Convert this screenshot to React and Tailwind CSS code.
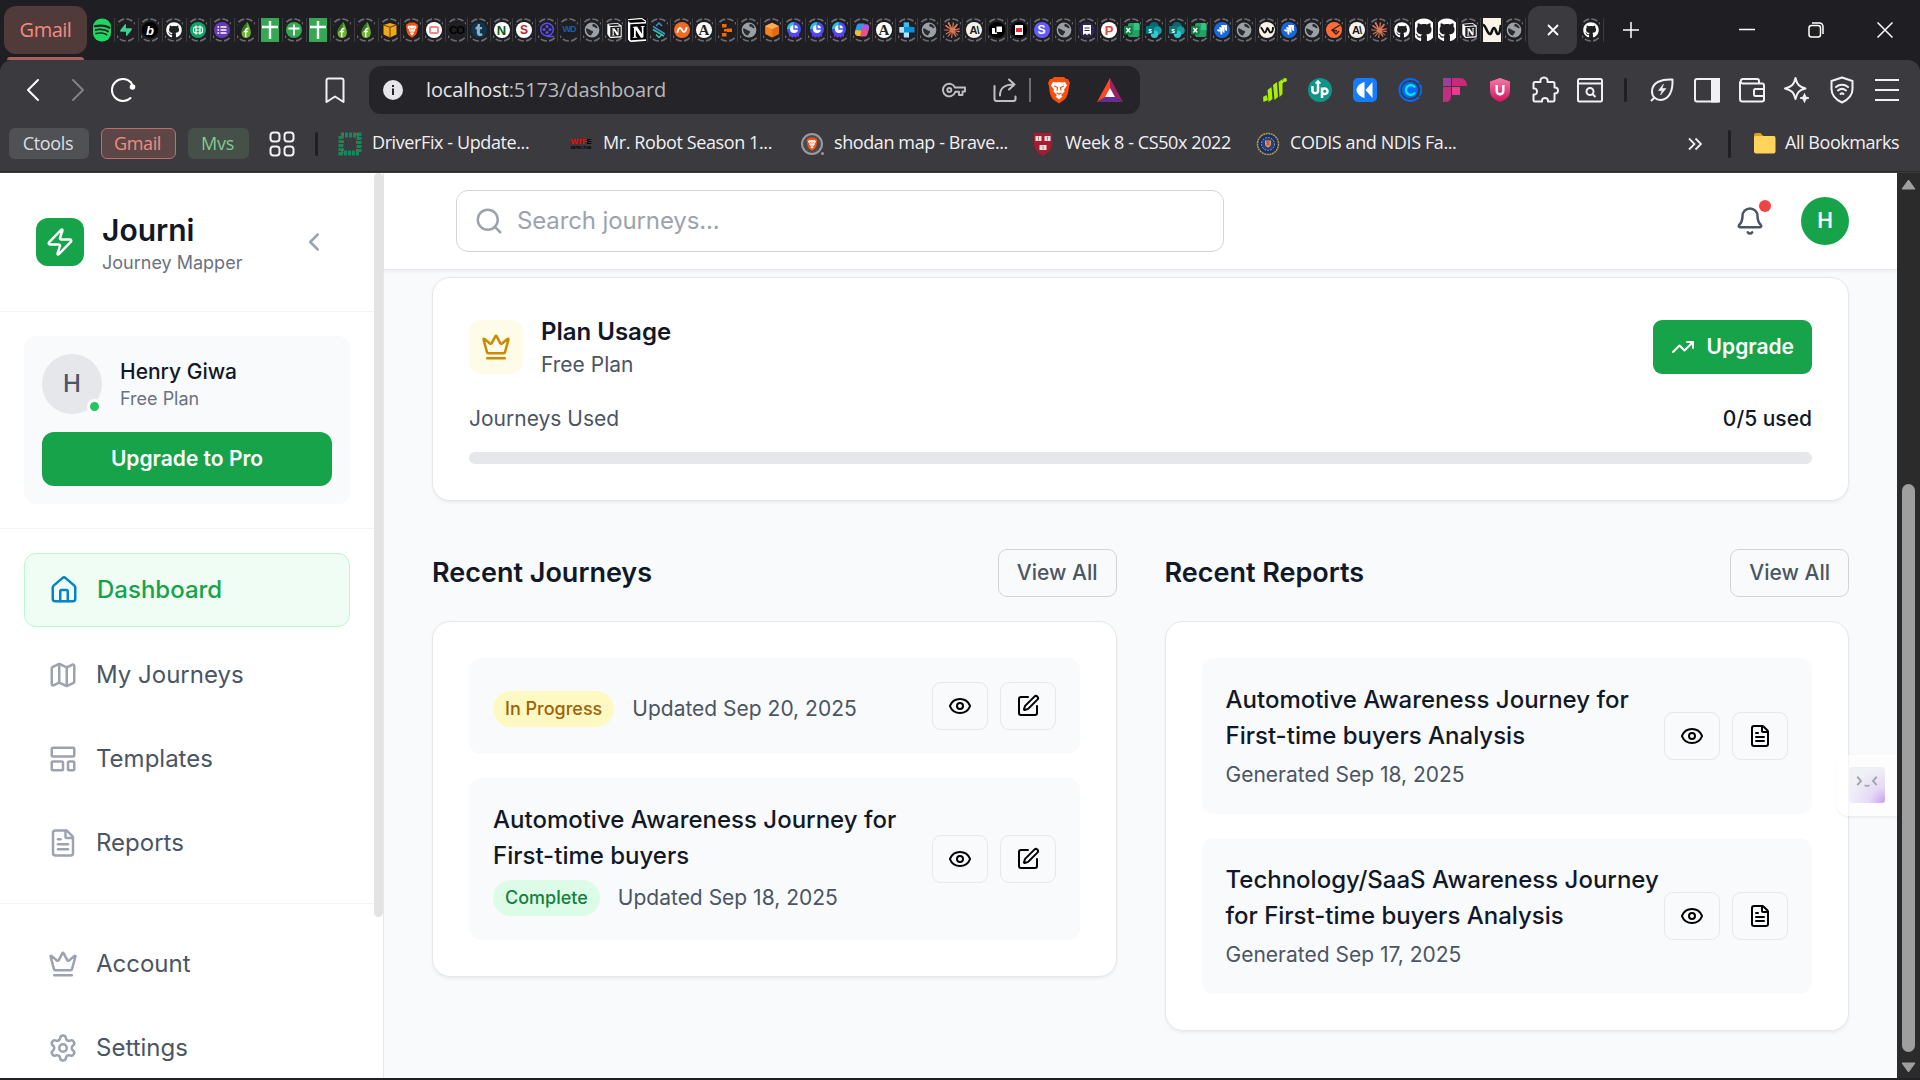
import React from "react";
import {
  Bell, ChevronLeft, Crown, Eye, FileText, House, LayoutTemplate, Map as MapIcon,
  Search, Settings, SquarePen, TrendingUp, Zap,
} from "lucide-react";
import { FaGithub, FaSpotify, FaTumblr } from "react-icons/fa6";
import { SiNotion, SiSupabase, SiClaude } from "react-icons/si";

/* ---------- browser tab strip ---------- */

const Globe = () => (
  <svg viewBox="0 0 16 16" className="size-4">
    <circle cx="8" cy="8" r="7.4" fill="#9aa0a6" />
    <path d="M2 6.5c2 0 3 .5 4.2 1.6 1 .9 2.3.3 2.8 1.4.5 1.2-.8 1.6-1.2 2.6-.3.8-.6 1.6-1.5 1.5C4 13 2 10.600 2 6.500zM9 1.800c-.8 1.200-1 1.900-.2 2.600.9.7 1.700.1 2.300 1 .5.800 1.600.9 2.700.7C13 3.800 11.500 2.200 9 1.800z" fill="#2a2a2f" />
  </svg>
);
const Disc = ({ bg, fg = "#fff", children, cls = "" }) => (
  <span
    className={`grid size-4 place-items-center overflow-hidden rounded-full font-['Liberation_Sans'] text-[11px] leading-none font-bold ${cls}`}
    style={{ backgroundColor: bg, color: fg }}
  >
    {children}
  </span>
);
const Forms = ({ bg }) => (
  <Disc bg={bg}>
    <svg viewBox="0 0 16 16" className="size-4" stroke="#fff" strokeWidth="1.700">
      <path d="M3.500 5h1.600M6.500 5h6M3.500 8h1.600M6.500 8h6M3.500 11h1.600M6.500 11h6" />
    </svg>
  </Disc>
);
const Leaf = () => (
  <svg viewBox="0 0 16 16" className="size-4">
    <path d="M9.500 0C6 4 3.500 7 3.500 10.500 3.500 14 5.500 16 8 16s4.800-2 4.800-5.300C12.800 7 11 4 9.500 0z" fill="#6cb52d" />
    <path d="M9.500 0C6 4 3.500 7 3.500 10.500l5-4z" fill="#2f7d1e" />
    <path d="M10.500 6.500c-2.200-.5-2.800.8-2.800 2.500V15M5.800 9.600h4" stroke="#fff" strokeWidth="1.500" fill="none" />
  </svg>
);
const SheetsFull = () => (
  <svg viewBox="0 0 18 24" className="h-6 w-[18px]">
    <path d="M0 0h18v24H0z" fill="#34a853" />
    <path d="M9 3v18M1 9h16" stroke="#fff" strokeWidth="2.400" />
  </svg>
);
const SheetsSmall = () => (
  <Disc bg="#34a853">
    <svg viewBox="0 0 16 16" className="size-4" stroke="#fff" strokeWidth="1.800"><path d="M8 2.500v11M2.500 6.500h11" /></svg>
  </Disc>
);
const Box = () => (
  <svg viewBox="0 0 16 16" className="size-4">
    <path d="M1.500 3L8 1l6.500 2v9.500L8 15.500l-6.500-3z" fill="#f0a81c" />
    <path d="M1.500 3L8 5.200 14.500 3M8 5.200v10" stroke="#6b4708" strokeWidth="1.100" fill="none" />
  </svg>
);
const Cube = () => (
  <svg viewBox="0 0 16 16" className="size-4">
    <path d="M8 .8L14.800 4v8L8 15.500 1.200 12V4z" fill="#f58220" />
    <path d="M8 .8L14.800 4 8 7.300 1.200 4z" fill="#fbab5a" />
    <path d="M8 7.300L14.800 4v8L8 15.500z" fill="#e06c10" />
  </svg>
);
const Medal = () => (
  <svg viewBox="0 0 16 16" className="size-4">
    <path d="M3 9h10v6l-2-1-1 2-2-1.500L6 16l-1-2-2 1z" fill="#7b2ff0" />
    <circle cx="8" cy="7" r="7" fill="#4a4bf5" />
    <path d="M1 7a7 7 0 0 1 7-7v7z" fill="#20c5d8" />
    <circle cx="8" cy="7" r="4" fill="#fff" />
    <path d="M8 2.500V7h4.500" stroke="#3b5bf5" strokeWidth="1.300" fill="none" />
  </svg>
);
const Copilot = () => (
  <svg viewBox="0 0 16 16" className="size-4">
    <path d="M5 1.500h5.500l-3 12H3.500C1 13.500.5 11 1.200 8.500L2.500 4C3 2.500 3.500 1.500 5 1.500z" fill="#2a9be8" />
    <path d="M1 9l2-1 5 1-1 5H3.500C1 13.500.500 11 1 9z" fill="#f5c21c" />
    <path d="M11 14.500H6l3-12h3.500c2.500 0 3 2.500 2.300 5L13.500 12c-.5 1.500-1 2.500-2.500 2.500z" fill="#e8528a" />
    <path d="M9 2.500h3.500c2.500 0 3 2.500 2.300 5l-6.500-1z" fill="#a45bea" />
  </svg>
);
const Checker = () => (
  <svg viewBox="0 0 16 16" className="size-4">
    <path d="M4.500 .500H10V5h5.500v5.500H10V15H4.500v-4.500H.500V5h4z" fill="#0a8fd8" />
    <path d="M.500 5h4.500v5.500H.500zM5 .500h5V5H5z" fill="#35c0f0" />
    <path d="M5 10.500h5V15.500H5zM.500 5H5v5.500H.500z" fill="#aee3f8" />
  </svg>
);
const ZigS = () => (
  <svg viewBox="0 0 16 16" className="size-4" fill="none" strokeWidth="1.500">
    <path d="M5 4l3-3 3 3M2 4.500l12 7.500" stroke="#3f8fd0" />
    <path d="M2 7.500L13 14M5 12.500l3 3 3-3" stroke="#35c8a0" />
  </svg>
);
const Excel = () => (
  <svg viewBox="0 0 16 16" className="size-4">
    <rect x="4" y="1" width="11.500" height="14" rx="2" fill="#21a366" />
    <path d="M10 1h4a1.500 1.500 0 0 1 1.500 1.500V8H10z" fill="#33c481" />
    <rect x="0" y="4" width="8.500" height="8.500" rx="1" fill="#107c41" />
    <path d="M2.300 6l4 4.500m0-4.500l-4 4.500" stroke="#fff" strokeWidth="1.300" />
  </svg>
);
const SharePoint = () => (
  <svg viewBox="0 0 16 16" className="size-4">
    <circle cx="8" cy="5" r="5" fill="#036c70" />
    <circle cx="11.500" cy="8.500" r="4.300" fill="#1a9ba1" />
    <circle cx="8.500" cy="12.300" r="3.700" fill="#37c6d0" />
    <rect x="0" y="4" width="8" height="8" rx="1" fill="#03787c" />
    <text x="4" y="10.500" fontSize="7.500" fontWeight="700" textAnchor="middle" fill="#fff">s</text>
  </svg>
);
const Jira = () => (
  <Disc bg="#1868db">
    <svg viewBox="0 0 16 16" className="size-4" fill="#fff">
      <path d="M7 3h6v6c-1.500 0-2.200-1-2.200-2.200V5.300H9.200C8 5.300 7 4.500 7 3zM5 5.200h5.500v5.500c-1.400 0-2-1-2-2V7.400H7.200C6 7.400 5 6.600 5 5.200zM3 7.400h5.300v5.400c-1.400 0-2-1-2-2V9.600H5.200C4 9.600 3 8.800 3 7.400z" />
    </svg>
  </Disc>
);
const Wave = ({ color = "#111" }) => (
  <svg viewBox="0 0 16 16" className="size-4" fill="none" stroke={color} strokeWidth="1.900">
    <path d="M1.500 5.500c2 0 2.500 5 4.300 5S7.500 6 8.500 6s1.500 4.500 3 4.500S14 8 14 5" />
  </svg>
);
const Tilde = () => (
  <svg viewBox="0 0 16 16" className="size-4" fill="none" stroke="#fff" strokeWidth="1.900" strokeLinecap="round">
    <path d="M3.500 10c1-4.500 3-5 4.500-2s3.500 2.500 4.500-2" />
  </svg>
);
const WaveFull = () => (
  <svg viewBox="0 0 18 24" className="h-6 w-[18px]" fill="none">
    <path d="M0 0h18v24H0z" fill="#faf3e8" />
    <path d="M0 7c3 0 4 9 7 9 2 0 2-6 4-6s2 6 4 6 2-4 3-9" stroke="#111" strokeWidth="2.600" />
  </svg>
);
const Postman = () => (
  <Disc bg="#ff6c37">
    <svg viewBox="0 0 16 16" className="size-4" fill="none" stroke="#33201a" strokeWidth="1.300"><path d="M14 3L6 8l4 4 3-3M6 8l5 1" /></svg>
  </Disc>
);
const Reel = () => (
  <svg viewBox="0 0 16 16" className="size-4" fill="none" stroke="#5b4df0" strokeWidth="1.500">
    <circle cx="8" cy="7.500" r="6.300" />
    <path d="M8 14.500h7" />
    <g fill="#5b4df0" stroke="none"><circle cx="8" cy="4.500" r="1.600" /><circle cx="8" cy="10.500" r="1.600" /><circle cx="5" cy="7.500" r="1.600" /><circle cx="11" cy="7.500" r="1.600" /></g>
  </svg>
);
const Blocks = () => (
  <svg viewBox="0 0 16 16" className="size-4" fill="#f56a00"><path d="M3 2h4.500v3.500H3zM3 11h4.500v3.500H3zM8 6.500h5V10H8zM5 7h3v2.500H5z" /></svg>
);
const BraveLion = ({ className = "h-7 w-6" }) => (
  <svg viewBox="0 0 24 28" className={className}>
    <path d="M7 1h10l2 2h2l2 4-1 3c-.5 7-2 12-5 14l-5 3.500L7 24C4 22 2.500 17 2 10L1 7l2-4h2z" fill="#fb4f0d" />
    <path d="M6 6l3 .5L12 6l3 .5 3-.5 2 3.500-3 4 .5 2L14 19l1.500 1.500L12 23.500 8.500 20.500 10 19l-3.500-3.500.5-2-3-4z" fill="#fff" />
    <path d="M7 10l3.500 1.500-.5 3M17 10l-3.500 1.500.5 3M9.500 17l2.500 1 2.500-1" stroke="#fb4f0d" strokeWidth="1.200" fill="none" />
  </svg>
);
const GithubFull = () => (
  <span className="flex h-6 w-[18px] justify-center overflow-hidden"><FaGithub className="size-6 shrink-0 text-white" /></span>
);
const NotionFull = () => (
  <span className="flex h-6 w-[18px] justify-center overflow-hidden bg-black"><SiNotion className="size-6 shrink-0 text-white" /></span>
);
const A = () => <Disc bg="#fff" fg="#222" cls="font-['Liberation_Serif'] text-[15px]">A</Disc>;
const Gh = () => <FaGithub className="size-4 text-white" />;
const Claude = () => <SiClaude className="size-4 text-[#d97757]" />;
const Anth = () => <Disc bg="#f4f3ee" fg="#191919" cls="text-[9px] tracking-[-1px]">A\</Disc>;
const Notion = () => <SiNotion className="size-[15px] text-white" />;

const RING = true;
const favicons = [
  [<span className="flex h-6 w-[18px] justify-center overflow-hidden rounded-[9px] bg-[#202024]"><FaSpotify className="size-6 shrink-0 text-[#1ed760]" /></span>],
  [<SiSupabase className="size-3 text-[#3ecf8e]" />, RING],
  [<Disc bg="#000" cls="text-[13px] italic">b</Disc>, RING],
  [<Gh />, RING],
  [<Disc bg="#10a568"><svg viewBox="0 0 16 16" className="size-4" fill="none" stroke="#fff" strokeWidth="1.200"><rect x="3.500" y="5" width="9" height="6" rx="2" /><path d="M6 3.500v9M10 3.500v9M6 8h4" /></svg></Disc>, RING],
  [<Forms bg="#673ab7" />, RING],
  [<Leaf />, RING],
  [<SheetsFull />],
  [<SheetsSmall />, RING],
  [<SheetsFull />],
  [<Leaf />, RING],
  [<Leaf />, RING],
  [<Box />, RING],
  [<BraveLion className="h-4 w-3.5" />, RING],
  [<Disc bg="#fff"><span className="h-2 w-2.5 rounded-[2px] border-2 border-[#f08a8a]" /></Disc>, RING],
  [<span className="font-['Liberation_Sans'] text-[11px] font-black tracking-[-1px] text-black">CO</span>, RING],
  [<Disc bg="#10344d"><FaTumblr className="size-3 text-[#8fb0c4]" /></Disc>, RING],
  [<Disc bg="#fff" fg="#0a5a14" cls="text-[13px]">N</Disc>, RING],
  [<Disc bg="#fff" fg="#b3262e" cls="text-[12px]">S</Disc>, RING],
  [<Reel />, RING],
  [<span className="font-['Liberation_Sans'] text-[9px] font-bold tracking-[-1px] text-[#1c5fa8]">WD</span>, RING],
  [<Globe />, RING],
  [<Notion />, RING],
  [<NotionFull />],
  [<ZigS />, RING],
  [<Disc bg="#f26b21"><Tilde /></Disc>, RING],
  [<A />, RING],
  [<Blocks />, RING],
  [<Globe />, RING],
  [<Cube />, RING],
  [<Medal />, RING],
  [<Medal />, RING],
  [<Medal />, RING],
  [<Copilot />, RING],
  [<A />, RING],
  [<Checker />, RING],
  [<Globe />, RING],
  [<Claude />, RING],
  [<Anth />, RING],
  [<Disc bg="#000"><svg viewBox="0 0 16 16" className="size-4" fill="#fff"><path d="M3 6h3v4.500h2V12H3zM7.500 4.500H13V10H7.500z" /></svg></Disc>, RING],
  [<Disc bg="#000"><span className="grid h-2.5 w-2 place-items-center bg-white"><span className="h-1 w-1.5 bg-[#e0323c]" /></span></Disc>, RING],
  [<Disc bg="#635bff" cls="text-[12px]">S</Disc>, RING],
  [<Globe />, RING],
  [<Disc bg="#2c2757"><svg viewBox="0 0 16 16" className="size-4"><path d="M4 3h8v10l-2-1.500L8 13l-2-1.500L4 13z" fill="#fff" /><path d="M5.500 6h5M5.500 8.500h5" stroke="#2c2757" /></svg></Disc>, RING],
  [<Disc bg="#fff" fg="#e8453c" cls="text-[13px]">P</Disc>, RING],
  [<Excel />, RING],
  [<SharePoint />, RING],
  [<SharePoint />, RING],
  [<Excel />, RING],
  [<Jira />, RING],
  [<Globe />, RING],
  [<Disc bg="#faf3e8"><Wave /></Disc>, RING],
  [<Jira />, RING],
  [<Globe />, RING],
  [<Postman />, RING],
  [<Anth />, RING],
  [<Claude />, RING],
  [<Gh />, RING],
  [<GithubFull />],
  [<GithubFull />],
  [<Notion />, RING],
  [<WaveFull />],
  [<Globe />, RING],
];

const Favicon = ({ icon, ring }) => (
  <span className="grid h-6 w-[18px] shrink-0 place-items-center overflow-hidden">
    {ring && (
      <svg viewBox="0 0 18 24" className="col-start-1 row-start-1 h-6 w-[18px]">
        <circle cx="9" cy="12" r="11" fill="none" stroke="#6b6b70" strokeWidth="1.700" strokeDasharray="6.400 2.240" />
      </svg>
    )}
    <span className="col-start-1 row-start-1 grid w-[18px] place-items-center">{icon}</span>
  </span>
);

const Tab = ({ item, width }) => (
  <div className={`flex h-6 shrink-0 items-center justify-between ${width}`}>
    <Favicon icon={item[0]} ring={item[1]} />
    <span className="mr-[2px] h-6 w-px bg-[#3c3b40]" />
  </div>
);

const TabStrip = () => (
  <div className="flex h-[60px] items-center bg-[#1f1e23]">
    <div className="ml-1 flex h-[60px] w-[83px] shrink-0 flex-col items-center pt-1.5">
      <div className="grid h-12 w-full place-items-center rounded-xl bg-[#513a3a] text-[20px] leading-none font-medium tracking-[-0.500px] text-[#f28b82]">Gmail</div>
      <div className="mt-[3px] h-[3px] w-[77px] rounded-t bg-[#a9615e]" />
    </div>
    <div className="ml-1.5 flex shrink-0">
      {favicons.map((f, i) => (
        <Tab key={i} item={f} width={i < 12 ? "w-6" : i === 12 ? "w-[21.500px]" : "w-[22.500px]"} />
      ))}
    </div>
    <div className="ml-[0.500px] grid h-12 w-[49px] shrink-0 place-items-center rounded-xl bg-[#3b3a3f]">
      <svg viewBox="0 0 12 12" className="size-3 stroke-white" strokeWidth="1.800"><path d="M1 1l10 10M11 1L1 11" /></svg>
    </div>
    <div className="ml-[5px] flex h-6 w-[22px] shrink-0 justify-between">
      <Favicon icon={<Gh />} ring />
      <span className="h-6 w-px bg-[#3c3b40]" />
    </div>
    <svg viewBox="0 0 16 16" className="ml-[19px] size-4 shrink-0 stroke-white" strokeWidth="1.500"><path d="M8 0v16M0 8h16" /></svg>
    <svg viewBox="0 0 16 16" className="ml-[100px] size-4 shrink-0 stroke-white" strokeWidth="1.500"><path d="M0 7.500h16" /></svg>
    <svg viewBox="0 0 16 16" className="ml-[53px] size-4 shrink-0 fill-none stroke-white" strokeWidth="1.500">
      <rect x="1" y="3.500" width="11.500" height="11.500" rx="2.500" />
      <path d="M4 1h7.500A3.500 3.500 0 0 1 15 4.500V12" />
    </svg>
    <svg viewBox="0 0 16 16" className="ml-[53px] size-4 shrink-0 stroke-white" strokeWidth="1.500"><path d="M.500.500l15 15M15.500.500l-15 15" /></svg>
  </div>
);

/* ---------- address bar ---------- */

const Cell = ({ children }) => <span className="grid h-12 w-[45px] place-items-center">{children}</span>;
const line = "size-7 fill-none stroke-[#f1f0f5]";

const Toolbar = () => (
  <div className="flex h-[60px] items-center">
    <div className="flex items-center pl-[19px]">
      <svg viewBox="0 0 28 28" className="size-7 fill-none stroke-white" strokeWidth="2" strokeLinecap="round" strokeLinejoin="round"><path d="M19 4L9 14l10 10" /></svg>
      <svg viewBox="0 0 28 28" className="ml-[17px] size-7 fill-none stroke-[#828186]" strokeWidth="2" strokeLinecap="round" strokeLinejoin="round"><path d="M9 4l10 10L9 24" /></svg>
      <svg viewBox="0 0 28 28" className="ml-[17px] size-7 fill-none stroke-white" strokeWidth="2" strokeLinecap="round">
        <path d="M22 6.500A11 11 0 1 0 21.500 22" />
        <circle cx="23.500" cy="11" r="2.800" className="fill-white stroke-none" />
        <path d="M22 6.500l1.500 3" />
      </svg>
      <svg viewBox="0 0 28 28" className="ml-[184px] size-7 fill-none stroke-[#f1f0f5]" strokeWidth="2" strokeLinejoin="round"><path d="M5.500 4.500a2 2 0 0 1 2-2h13a2 2 0 0 1 2 2V26L14 20.500 5.500 26z" /></svg>
    </div>
    <div className="ml-5 flex h-12 w-[771px] items-center rounded-xl bg-[#252429] pl-[14px]">
      <span className="grid size-5 place-items-center rounded-full bg-[#e6e5ea]">
        <svg viewBox="0 0 20 20" className="size-5"><path d="M9 5h2v2H9zM9 8.500h2V15H9z" fill="#252429" /></svg>
      </span>
      <span className="ml-[23px] w-[240px] text-[20px] tracking-[-0.120px] whitespace-nowrap text-[#e6e5ea]">
        localhost<span className="text-[#b9b8bd]">:5173/dashboard</span>
      </span>
      <svg viewBox="0 0 24 16" className="ml-[276px] h-4 w-6 fill-none stroke-[#bfbec3]" strokeWidth="1.900" strokeLinejoin="round">
        <path d="M13 5.500h10v4h-2.500V13H17V9.800h-3.700A6.300 6.300 0 1 1 13 5.500z" />
        <circle cx="7.300" cy="8" r="2" />
      </svg>
      <svg viewBox="0 0 24 24" className="ml-[27px] size-6 fill-none stroke-[#bfbec3]" strokeWidth="2" strokeLinecap="round" strokeLinejoin="round">
        <path d="M1.500 8v13a2 2 0 0 0 2 2h17a2 2 0 0 0 2-2v-2.500M7 17.500C7 10 11 6.500 21 6.500M16 1.500l5.500 5-5.500 5" />
      </svg>
      <span className="ml-[12px] h-6 w-0.5 bg-[#6f6e73]" />
      <span className="ml-4"><BraveLion /></span>
      <svg viewBox="0 0 26 24" className="ml-[26px] h-6 w-[26px]">
        <path d="M13 0L0 24l8.500-5L13 10z" fill="#ff4724" />
        <path d="M13 0l13 24-8.500-5L13 10z" fill="#9e1f63" />
        <path d="M0 24h26l-8.500-5h-9z" fill="#662d91" />
        <path d="M13 10l5 9H8z" fill="#fff" />
      </svg>
    </div>
    <div className="ml-[112px] flex items-center">
      <Cell>
        <svg viewBox="0 0 24 24" className="size-6 fill-[#a6f000]"><path d="M0 19l3.500-2 1.500 5-4.500 2zM4.500 12l4-3 1 12-4 3zM10 7l4-3 1 15-3.500 3zM15.500 4l4-3v15l-3 3z" /><path d="M17 6l5-4" stroke="#a6f000" strokeWidth="2" /><circle cx="22" cy="2" r="2" /></svg>
      </Cell>
      <Cell>
        <svg viewBox="0 0 24 24" className="size-6 fill-none stroke-white" strokeWidth="2.500">
          <circle cx="12" cy="12" r="12" className="fill-[#0f9488] stroke-none" />
          <path d="M4.500 8v5.500a3 3 0 0 0 5.500 0V4M14 20V9.500M14 12.500a2.800 2.800 0 1 1 0 1.500" />
          <path d="M7.500 5.500L10 3l2.500 2.500" strokeWidth="1.600" />
        </svg>
      </Cell>
      <Cell>
        <svg viewBox="0 0 24 24" className="size-6"><rect width="24" height="24" rx="5" fill="#157bff" /><path d="M11.500 4v16c-4-1-8-4.500-8-8s4-7 8-8zM19.500 4v16l-7-8z" fill="#fff" /></svg>
      </Cell>
      <Cell>
        <svg viewBox="0 0 24 24" className="size-6 fill-none" strokeLinecap="round">
          <path d="M20.500 4.500A11 11 0 1 0 20.500 19.500" stroke="#006bff" strokeWidth="1.800" />
          <circle cx="12" cy="12" r="8" fill="#006bff" />
          <path d="M16.500 8.800C13 5.500 8 7.500 8 12s5 6.500 8.500 3.200" stroke="#0ae8f0" strokeWidth="2.200" />
          <path d="M22 7c1.500 3 1.500 7 0 10" stroke="#006bff" strokeWidth="1.800" />
        </svg>
      </Cell>
      <Cell>
        <svg viewBox="0 0 24 24" className="size-6"><path d="M0 0h8v8H0z" fill="#9b3f9e" /><path d="M9 0h8a7 7 0 0 1 7 7v1H9z" fill="#c72a78" /><path d="M0 9h8v9.500A5.500 5.500 0 0 1 2.500 24H0z" fill="#c42e80" /><path d="M9 9h8v8H9z" fill="#ee3a8c" /></svg>
      </Cell>
      <Cell>
        <svg viewBox="0 0 24 24" className="size-6">
          <defs><linearGradient id="shield" x1="0" y1="0" x2="0" y2="1"><stop offset="0" stopColor="#f87aa8" /><stop offset="1" stopColor="#d3125f" /></linearGradient></defs>
          <path d="M12 0l10 3.500V13c0 5-4 9-10 11C6 22 2 18 2 13V3.500z" fill="url(#shield)" />
          <path d="M8.700 7v6a3.300 3.300 0 0 0 6.600 0V7" fill="none" stroke="#fff" strokeWidth="2.400" />
        </svg>
      </Cell>
      <Cell>
        <svg viewBox="0 0 28 28" className={line} strokeWidth="2" strokeLinejoin="round">
          <path d="M4 6h5.500c-.5-2.800 1-4.500 3.500-4.500S17 3.200 16.500 6H22a1.500 1.500 0 0 1 1.500 1.500v4c2.500-.3 3.500 1.200 3.500 3s-1 3.200-3.500 3V24a1.500 1.500 0 0 1-1.500 1.500h-5c.3-2.500-1.200-3.500-3-3.500s-3.300 1-3 3.500H4A1.500 1.500 0 0 1 2.500 24v-5.500c2.500.3 3.500-1 3.500-3s-1-3.300-3.500-3v-5A1.500 1.500 0 0 1 4 6z" />
        </svg>
      </Cell>
      <Cell>
        <svg viewBox="0 0 28 28" className={line} strokeWidth="2"><rect x="2" y="3" width="24" height="22.500" rx="1.500" /><path d="M2 7.500h24" /><circle cx="14" cy="15.500" r="3.500" /><path d="M16.500 18l3 3" /></svg>
      </Cell>
      <span className="grid h-6 w-[27px] place-items-center"><span className="h-6 w-[3px] rounded bg-[#1f1e23]" /></span>
      <Cell>
        <svg viewBox="0 0 28 28" className={line} strokeWidth="2" strokeLinejoin="round"><path d="M24.500 3.500C14 3 4 6 4 15.500 4 21 8 24 12.500 24 21 24 25 15 24.500 3.500zM7 21l-4 4" /><path d="M15.500 8l-5 6.500h3.500L12.500 19l5.500-6.500h-4z" fill="#f1f0f5" strokeWidth=".6" /></svg>
      </Cell>
      <Cell>
        <svg viewBox="0 0 28 28" className={line} strokeWidth="2"><rect x="2" y="3" width="24" height="22.500" rx="2" /><path d="M19 3h7v22.500h-7z" fill="#f1f0f5" /></svg>
      </Cell>
      <Cell>
        <svg viewBox="0 0 28 28" className={line} strokeWidth="2" strokeLinejoin="round"><path d="M21 7.500V5a2 2 0 0 0-2-2H4.500a2.300 2.300 0 0 0 0 4.500H24a2 2 0 0 1 2 2v14a2 2 0 0 1-2 2H4.500a2.500 2.500 0 0 1-2.500-2.500V5.500M26 13h-8.500a1.500 1.500 0 0 0-1.500 1.500v4a1.500 1.500 0 0 0 1.500 1.500H26" /></svg>
      </Cell>
      <Cell>
        <svg viewBox="0 0 28 28" className={line} strokeWidth="2" strokeLinejoin="round"><path d="M12.500 2c1.500 6.500 3.500 8.500 10 10.500-6.500 1.500-8.500 4-10 10.500C11 16.500 9 14.500 2 12.500 9 10.500 11 8.500 12.500 2z" /><path d="M21.500 17.500l1.200 3.300 3.300 1.200-3.300 1.200-1.200 3.300-1.200-3.300L17 22l3.300-1.200z" fill="#f1f0f5" strokeWidth="1" /></svg>
      </Cell>
      <Cell>
        <svg viewBox="0 0 28 28" className={line} strokeWidth="2" strokeLinejoin="round" strokeLinecap="round"><path d="M14 1.500L24.500 5v8c0 6.500-4 10.500-10.500 13.500C7.500 23.500 3.500 19.500 3.500 13V5z" /><path d="M8 11c3.500-3 8.500-3 12 0M10 14.500c2.500-2 5.500-2 8 0M12.500 18c1-.8 2-.8 3 0" /></svg>
      </Cell>
      <Cell>
        <svg viewBox="0 0 28 28" className={line} strokeWidth="2"><path d="M2 4h24M2 14h24M2 24h24" /></svg>
      </Cell>
    </div>
  </div>
);

const Mark = ({ icon, label, width }) => (
  <div className={`flex shrink-0 items-center ${width}`}>
    <span className="mr-2.5 grid size-6 place-items-center">{icon}</span>
    <span className="pb-0.5 text-[18px] tracking-[-0.400px] whitespace-nowrap text-[#f1f0f5]">{label}</span>
  </div>
);

const BookmarkBar = () => (
  <div className="flex h-[52px] items-center border-b border-[#2a292e] pb-1 pl-[9px]">
    <span className="grid h-[31px] w-20 place-items-center rounded-md bg-[#505155] pr-0.5 pb-0.5 text-[18px] leading-none font-medium tracking-[-0.300px] text-[#dedfe3]">Ctools</span>
    <span className="ml-3 grid h-[31px] w-[75px] place-items-center rounded-md border border-[#bd706b] bg-[#5d4746] pr-0.5 pb-0.5 text-[18px] leading-none font-medium tracking-[-0.400px] text-[#f28b82]">Gmail</span>
    <span className="ml-3 grid h-[31px] w-[61px] place-items-center rounded-md bg-[#455049] pr-0.5 pb-0.5 text-[18px] leading-none font-medium tracking-[-0.300px] text-[#81c995]">Mvs</span>
    <svg viewBox="0 0 26 26" className="ml-5 size-[26px] fill-none stroke-[#f1f0f5]" strokeWidth="2"><rect x="1.500" y="1.500" width="9" height="9" rx="3" /><rect x="15.500" y="1.500" width="9" height="9" rx="3" /><rect x="1.500" y="15.500" width="9" height="9" rx="3" /><rect x="15.500" y="15.500" width="9" height="9" rx="3" /></svg>
    <span className="mr-5 ml-5 h-6 w-[3px] rounded bg-[#1f1e23]" />
    <Mark width="w-[231px]" label="DriverFix - Update..." icon={
      <svg viewBox="0 0 24 24" className="size-6 fill-none"><rect x="3" y="3" width="18" height="18" stroke="#12885c" strokeWidth="5" strokeDasharray="3 1" /><path d="M5 1v22M19 1v22" stroke="#a8562c" strokeWidth="1.500" strokeDasharray="2 6" /></svg>
    } />
    <Mark width="w-[231px]" label="Mr. Robot Season 1..." icon={
      <span className="flex flex-col items-center font-['Liberation_Sans'] leading-none font-black"><span className="text-[8px] tracking-tighter text-[#f00]">WTF<span className="text-black">E</span></span><span className="text-[4px] tracking-tighter text-black">DETECTIVE</span></span>
    } />
    <Mark width="w-[231px]" label="shodan map - Brave..." icon={
      <span className="flex items-end"><span className="grid size-[22px] shrink-0 place-items-center rounded-full border-2 border-[#9a9aa0] bg-[#4a4a50]"><BraveLion className="h-3.5 w-3" /></span><span className="-ml-0.5 size-[3px] shrink-0 rounded-full bg-[#9a9aa0]" /></span>
    } />
    <Mark width="w-[225px]" label="Week 8 - CS50x 2022" icon={
      <svg viewBox="0 0 24 24" className="size-6"><path d="M3 1h18v11c0 6-5 9-9 12-4-3-9-6-9-12z" fill="#a51c30" /><path d="M4.500 4h6v5h-6zM13.500 4h6v5h-6zM8.500 13h7v5h-7z" fill="#eedfe0" /><path d="M7.500 4.500v4M16.500 4.500v4M12 13.500v4" stroke="#8a6a70" strokeWidth=".8" /></svg>
    } />
    <Mark width="w-[220px]" label="CODIS and NDIS Fa..." icon={
      <svg viewBox="0 0 24 24" className="size-6"><circle cx="12" cy="12" r="10.500" fill="#1c2f63" stroke="#b9a13c" strokeWidth="1.500" strokeDasharray="2 .6" /><circle cx="12" cy="12" r="6.500" fill="#2c3f78" stroke="#a9b0cc" strokeDasharray="1.500 1.500" /><path d="M9 8.500h6v3.500c0 2-1.300 2.800-3 3.500-1.700-.7-3-1.500-3-3.500z" fill="#c9a94a" /><path d="M10.500 9h3v4.500h-3z" fill="#d5525a" /></svg>
    } />
    <svg viewBox="0 0 14 14" className="ml-[212px] size-3.5 fill-none stroke-[#f1f0f5]" strokeWidth="1.800"><path d="M1 1.500L6.500 7 1 12.500M7.500 1.500L13 7l-5.500 5.500" /></svg>
    <span className="mr-[22px] ml-[26px] h-7 w-[3px] rounded bg-[#1f1e23]" />
    <svg viewBox="0 0 24 24" className="size-6"><path d="M1 3a2 2 0 0 1 2-2h4.500l3 3h11v14H1z" fill="#d9a018" /><rect x="1" y="4" width="21.500" height="17.500" rx="2" fill="#ffd35c" /></svg>
    <span className="ml-2 pb-0.5 text-[18px] tracking-[-0.450px] whitespace-nowrap text-[#f1f0f5]">All Bookmarks</span>
  </div>
);

/* ---------- dashboard page ---------- */

const NavItem = ({ Icon, label, active }) => (
  <a className={`flex items-center gap-3 rounded-lg px-4 py-3 text-base ${active ? "border border-[#bbf7d0] bg-[#f0fdf4] font-medium text-[#16a34a]" : "text-[#4b5563]"}`}>
    <Icon className={`size-5 ${active ? "text-[#0284c7]" : "text-[#9ca3af]"}`} strokeWidth={2} />
    <span>{label}</span>
  </a>
);

const Sidebar = () => (
  <aside className="flex w-64 shrink-0 overflow-hidden border-r border-[#e5e7eb] bg-white">
    <div className="min-w-0 flex-1">
      <div className="flex items-center border-b border-[#f3f4f6] p-6">
        <span className="grid size-8 place-items-center rounded-lg bg-[#16a34a] text-white"><Zap className="size-5" /></span>
        <div className="ml-3 flex-1">
          <h1 className="text-xl font-semibold text-[#111827]">Journi</h1>
          <p className="text-xs text-[#6b7280]">Journey Mapper</p>
        </div>
        <button className="p-1.5 text-[#9ca3af]"><ChevronLeft className="size-5" /></button>
      </div>
      <div className="border-b border-[#f3f4f6] p-4">
        <div className="rounded-lg bg-[#f9fafb] p-3">
          <div className="flex items-center gap-3">
            <div className="relative grid size-10 place-items-center rounded-full bg-[#e5e7eb] text-base font-medium text-[#4b5563]">
              H
              <span className="absolute right-0 bottom-0 size-2.5 rounded-full border-2 border-white bg-[#22c55e]" />
            </div>
            <div>
              <p className="text-sm font-medium text-[#111827]">Henry Giwa</p>
              <p className="text-xs text-[#6b7280]">Free Plan</p>
            </div>
          </div>
          <button className="mt-3 h-9 w-full rounded-lg bg-[#16a34a] text-sm font-semibold text-white">Upgrade to Pro</button>
        </div>
      </div>
      <nav className="space-y-2 border-b border-[#f3f4f6] p-4">
        <NavItem Icon={House} label="Dashboard" active />
        <NavItem Icon={MapIcon} label="My Journeys" />
        <NavItem Icon={LayoutTemplate} label="Templates" />
        <NavItem Icon={FileText} label="Reports" />
      </nav>
      <nav className="space-y-2 p-4">
        <NavItem Icon={Crown} label="Account" />
        <NavItem Icon={Settings} label="Settings" />
      </nav>
    </div>
    <div className="h-[496px] w-1.5 rounded-full bg-[#e3e3e3]" />
  </aside>
);

const Header = () => (
  <header className="flex h-[64.670px] shrink-0 items-center justify-between border-b border-[#e5e7eb] bg-white px-8 shadow-xs">
    <div className="ml-4 flex w-[512px] items-center gap-2 rounded-lg border border-[#d1d5db] px-[11.330px] py-2">
      <Search className="size-5 text-[#9ca3af]" />
      <span className="ml-[0.670px] text-base tracking-[-0.080px] text-[#9ca3af]">Search journeys...</span>
    </div>
    <div className="flex items-center gap-4">
      <button className="relative p-2 text-[#4b5563]">
        <Bell className="size-5" />
        <span className="absolute top-1 right-1 size-2 rounded-full bg-[#ef4444]" />
      </button>
      <span className="grid size-8 place-items-center rounded-full bg-[#16a34a] text-sm font-semibold text-white">H</span>
    </div>
  </header>
);

const PlanUsage = () => (
  <section className="rounded-xl border border-[#e5e7eb] bg-white p-6 shadow-xs">
    <div className="mb-4 flex items-center gap-3">
      <span className="rounded-lg bg-[#fefce8] p-2 text-[#ca8a04]"><Crown className="size-5" /></span>
      <div className="flex-1">
        <h3 className="text-base font-semibold text-[#111827]">Plan Usage</h3>
        <p className="text-sm text-[#4b5563]">Free Plan</p>
      </div>
      <button className="flex h-9 items-center gap-2 rounded-md bg-[#16a34a] px-3 text-sm font-semibold text-white">
        <TrendingUp className="size-4" />
        Upgrade
      </button>
    </div>
    <div className="mb-3 flex justify-between text-sm">
      <span className="text-[#4b5563]">Journeys Used</span>
      <span className="font-medium text-[#111827]">0/5 used</span>
    </div>
    <div className="h-2 rounded-full bg-[#e5e7eb]" />
  </section>
);

const IconButton = ({ Icon }) => (
  <button className="grid h-8 w-[37.330px] place-items-center rounded-md border border-[#e5e7eb] text-black"><Icon className="size-4" /></button>
);

const Row = ({ title, badge, date, Second }) => (
  <div className="flex items-center justify-between rounded-lg bg-[#f9fafb] p-4">
    <div className="min-w-0 flex-1">
      {title && <h4 className="text-base font-medium text-[#111827]">{title.map((t) => <span key={t} className="block whitespace-nowrap">{t}</span>)}</h4>}
      <div className="mt-1 flex items-center gap-3 text-sm text-[#4b5563]">
        {badge}
        <span>{date}</span>
      </div>
    </div>
    <div className="flex gap-2">
      <IconButton Icon={Eye} />
      <IconButton Icon={Second} />
    </div>
  </div>
);

const Panel = ({ title, children }) => (
  <section>
    <div className="mb-4 flex items-center justify-between">
      <h2 className="text-lg font-semibold text-[#111827]">{title}</h2>
      <button className="h-8 rounded-md border border-[#d1d5db] px-3 text-sm font-medium text-[#4b5563]">View All</button>
    </div>
    <div className="space-y-4 rounded-xl border border-[#e5e7eb] bg-white p-6 shadow-xs">{children}</div>
  </section>
);

const Assistant = () => (
  <div className="absolute top-[388px] right-0 flex h-[40.500px] w-10 items-center rounded-l-lg bg-white/60 pl-2 shadow-xs">
    <svg viewBox="0 0 24 24" className="-mt-px size-6">
      <defs>
        <radialGradient id="glow" cx="1" cy="1" r="1"><stop offset="0" stopColor="#c9a0ee" /><stop offset=".45" stopColor="#e6daf5" /><stop offset="1" stopColor="#eff1f7" /></radialGradient>
      </defs>
      <rect width="24" height="24" rx="2" fill="url(#glow)" />
      <path d="M5.500 6.500L8 9.300l-2.500 2.800M18.500 6.500L16 9.300l2.500 2.800M10.500 12c.8 1 2.200 1 3 0" fill="none" stroke="#a3a6b0" strokeWidth="1.300" />
    </svg>
  </div>
);

const Scrollbar = () => (
  <div className="flex w-[23px] shrink-0 flex-col items-center bg-[#2b2b2b]">
    <svg viewBox="0 0 15 11" className="mt-1.5 h-[11px] w-[15px]"><path d="M7.500 1L14 10H1z" fill="#9f9f9f" stroke="#9f9f9f" strokeLinejoin="round" /></svg>
    <div className="mt-[294px] h-[568px] w-[13px] rounded-full bg-[#9f9f9f]" />
    <svg viewBox="0 0 15 11" className="mt-[10px] h-[11px] w-[15px]"><path d="M7.500 10L14 1H1z" fill="#9f9f9f" stroke="#9f9f9f" strokeLinejoin="round" /></svg>
  </div>
);

export default function App() {
  return (
    <div className="flex h-[1080px] w-[1920px] flex-col overflow-hidden bg-[#202025] font-['Open_Sans',sans-serif]">
      <TabStrip />
      <div className="h-[113px] shrink-0 bg-[#1f1e23]">
        <div className="h-[113px] rounded-t-xl bg-[#3b3a3f]">
          <Toolbar />
          <BookmarkBar />
        </div>
      </div>
      <div className="flex h-[905px] shrink-0">
        <div className="w-[1897px] shrink-0">
          <div className="relative flex h-[603.330px] overflow-hidden bg-[#f9fafb] font-['Inter',sans-serif] [zoom:1.5]">
            <Sidebar />
            <div className="flex min-w-0 flex-1 flex-col">
              <Header />
              <main className="flex-1 space-y-8 px-8 pt-[4.670px]">
                <PlanUsage />
                <div className="grid grid-cols-2 items-start gap-8">
                  <Panel title="Recent Journeys">
                    <Row
                      badge={<span className="rounded-full bg-[#fef9c3] px-2 py-1 text-xs font-medium text-[#a16207]">In Progress</span>}
                      date="Updated Sep 20, 2025"
                      Second={SquarePen}
                    />
                    <Row
                      title={["Automotive Awareness Journey for", "First-time buyers"]}
                      badge={<span className="rounded-full bg-[#dcfce7] px-2 py-1 text-xs font-medium text-[#15803d]">Complete</span>}
                      date="Updated Sep 18, 2025"
                      Second={SquarePen}
                    />
                  </Panel>
                  <Panel title="Recent Reports">
                    <Row title={["Automotive Awareness Journey for", "First-time buyers Analysis"]} date="Generated Sep 18, 2025" Second={FileText} />
                    <Row title={["Technology/SaaS Awareness Journey", "for First-time buyers Analysis"]} date="Generated Sep 17, 2025" Second={FileText} />
                  </Panel>
                </div>
              </main>
            </div>
            <Assistant />
          </div>
        </div>
        <Scrollbar />
      </div>
    </div>
  );
}
